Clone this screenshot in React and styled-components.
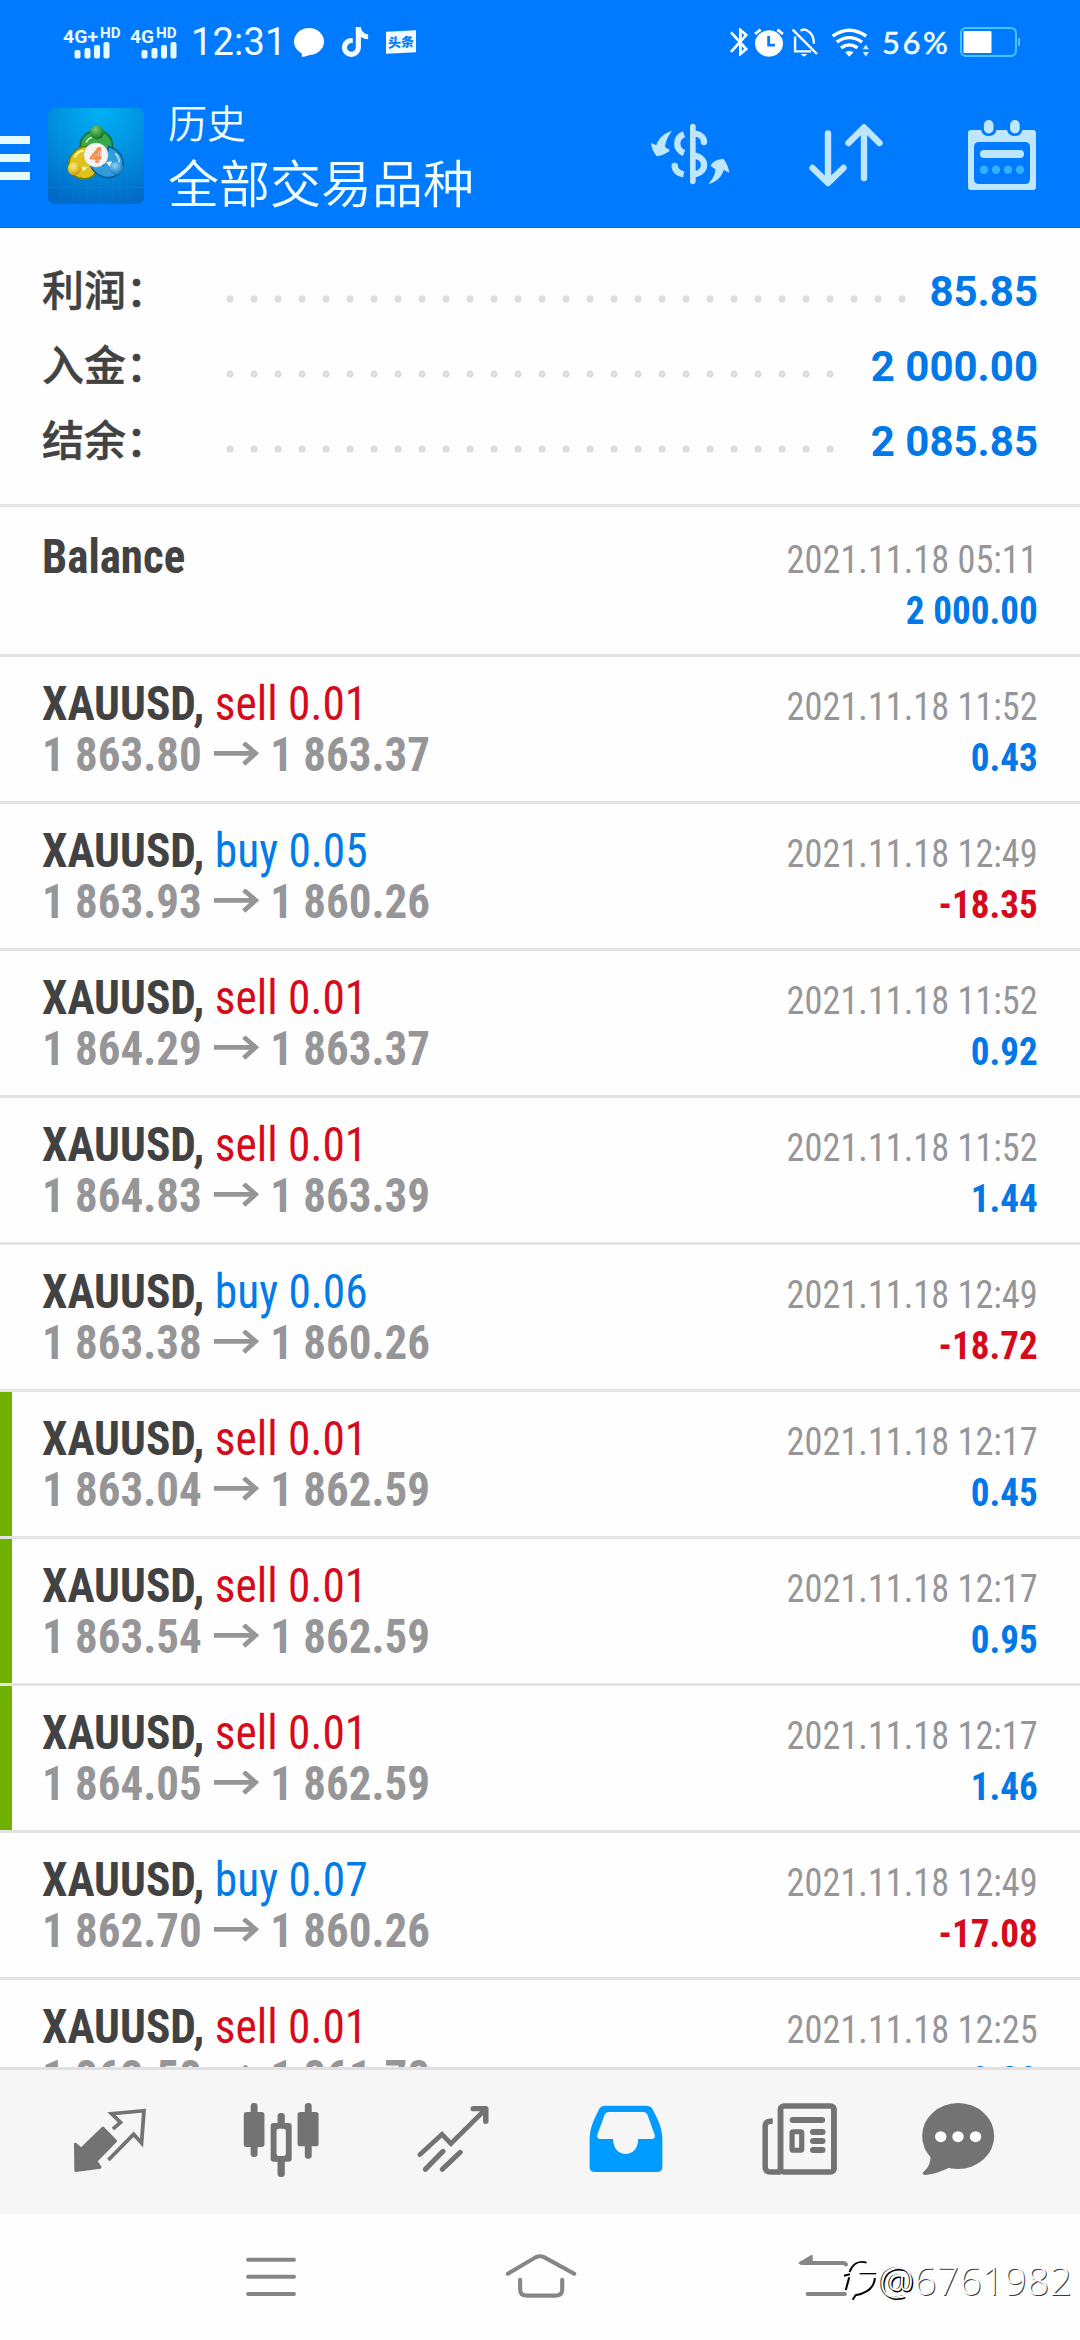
import React from 'react';
import styled, { createGlobalStyle } from 'styled-components';
import { FaTiktok } from 'react-icons/fa';

const GlobalStyle = createGlobalStyle`
  body {
    margin: 0;
    background-color: #fefefe;
  }

  svg {
    display: block;
    flex-shrink: 0;
  }
`;

const AppContainer = styled.div`
  display: flex;
  flex-direction: column;
  width: 1080px;
  height: 2340px;
  overflow: hidden;
  background-color: #fefefe;
  font-family: 'Roboto Condensed', Roboto, 'Noto Sans CJK SC', sans-serif;
`;

const Header = styled.header`
  height: 228px;
  box-sizing: border-box;
  border-bottom: 1px solid #0a67cc;
  background-color: #007bff;
  color: #f2fdff;
`;

const StatusBar = styled.div`
  display: flex;
  justify-content: space-between;
  height: 84px;
  padding: 0 60px 0 63px;
`;

const StatusGroup = styled.div`
  display: flex;
  align-items: center;
`;

const StatusItem = styled.div`
  margin-left: ${props => props.$gap || 0}px;
`;

const Clock = styled.div`
  width: 93px;
  margin-left: 14px;
  font-family: Roboto, sans-serif;
  font-size: 38px;
  line-height: 84px;
  letter-spacing: 0.2px;
`;

const BatteryLevel = styled.div`
  width: 70px;
  margin-left: 12px;
  font-family: Lato, sans-serif;
  font-size: 31px;
  line-height: 86px;
  letter-spacing: 2.5px;
  white-space: nowrap;
  -webkit-text-stroke: 0.5px #f2fdff;
`;

const NewsBadge = styled.div`
  width: 30px;
  margin-left: 16px;
  background-color: #f2fdff;
  color: #007bff;
  font-family: 'Noto Sans CJK SC', sans-serif;
  font-size: 13px;
  font-weight: 900;
  line-height: 22px;
  text-align: center;
  transform: skewY(-3deg);
`;

const Toolbar = styled.div`
  display: flex;
  align-items: center;
  height: 144px;
`;

const MenuButton = styled.div`
  display: flex;
  flex-direction: column;
  gap: 10px;
  width: 30px;
  margin: 4px 18px 0 0;
`;

const MenuBar = styled.span`
  height: 8px;
  background-color: #e6faff;
`;

const Titles = styled.div`
  flex: 1;
  align-self: flex-start;
  padding: 10px 0 0 24px;
  font-family: 'Noto Sans CJK SC', sans-serif;
  font-weight: 350;
`;

const Subtitle = styled.div`
  font-size: 39px;
  line-height: 54px;
`;

const Title = styled.div`
  font-size: 51px;
  line-height: 66px;
`;

const Action = styled.div`
  display: flex;
  justify-content: center;
  width: 156px;
`;

const Summary = styled.section`
  height: 250px;
  padding: 26px 42px 0;
  border-bottom: 3px solid #e3e3e3;
`;

const SummaryRow = styled.div`
  display: flex;
  height: 75px;
`;

const SummaryLabel = styled.div`
  width: 176px;
  color: #424242;
  font-family: 'Noto Sans CJK SC', sans-serif;
  font-size: 42px;
  font-weight: 500;
  line-height: 67px;
  -webkit-text-stroke: 0.5px #424242;
`;

const Leader = styled.div`
  flex: 1;
  margin-right: 22px;
  background: radial-gradient(circle at 12px 45px, #dedede 3.2px, transparent 4.2px) repeat-x;
  background-size: 24px 75px;
`;

const SummaryValue = styled.div`
  color: #0078e7;
  font-family: Roboto, sans-serif;
  font-size: 42px;
  font-weight: 700;
  line-height: 75px;
`;

const List = styled.main`
  height: 1560px;
  overflow: hidden;
`;

const Row = styled.div`
  display: flex;
  justify-content: space-between;
  height: ${props => (props.$tall ? 147 : 144)}px;
  box-sizing: border-box;
  padding: ${props => (props.$tall ? 24 : 21)}px 42px 0 ${props => (props.$marked ? 30 : 42)}px;
  border-left: ${props => (props.$marked ? '12px solid #6eb100' : 'none')};
`;

const Divider = styled.div`
  height: 3px;
  background-color: #e3e3e3;
`;

const Deal = styled.div`
  font-size: 48px;
  font-weight: 700;
  line-height: 51px;
  white-space: nowrap;
`;

const Symbol = styled.div`
  color: #424242;
  transform: scaleX(${props => props.$squeeze || 0.945});
  transform-origin: left;
`;

const Side = styled.span`
  color: ${props => (props.$side === 'buy' ? '#007be8' : '#d60a1a')};
  font-weight: 400;
`;

const Prices = styled.div`
  display: flex;
  align-items: center;
  gap: 12px;
  color: #969698;
  transform: scaleX(0.937);
  transform-origin: left;
`;

const Result = styled.div`
  padding-top: 4px;
  font-size: 39px;
  line-height: 51px;
  text-align: right;
  white-space: nowrap;
`;

const Time = styled.div`
  color: #969698;
  transform: scaleX(0.931);
  transform-origin: right;
`;

const Profit = styled.div`
  color: ${props => (props.$loss ? '#d60a1a' : '#0078e7')};
  font-weight: 700;
  transform: scaleX(0.951);
  transform-origin: right;
`;

const TabBar = styled.nav`
  display: grid;
  grid-template-columns: 171px 172px 173px 174px 158px 80px;
  align-items: center;
  height: 144px;
  padding-left: 70px;
  border-top: 3px solid #e0e0e0;
  background-color: #f6f6f6;
`;

const SystemNav = styled.div`
  position: relative;
  display: grid;
  grid-template-columns: 260px 292px 54px;
  height: 87px;
  padding: 39px 0 0 244px;
`;

const Watermark = styled.div`
  position: absolute;
  top: 43px;
  right: 8px;
  display: flex;
  align-items: center;
  color: #ffffff;
  font-family: 'Open Sans', sans-serif;
  font-size: 39px;
  font-weight: 300;
  line-height: 46px;
  letter-spacing: 0.3px;
  text-shadow: 1px 1px 0 #3a3a3a;
`;

const WatermarkAt = styled.span`
  text-shadow: 1.5px 1.5px 0 #000000, -1px 0 0 #222222;
`;

function Signal({ label, labelWidth, width }) {
  return (
    <svg width={width} height="36" viewBox={`0 0 ${width} 36`} fill="#e6faff" fontFamily="Roboto" fontWeight="700">
      <text x="0" y="18.5" fontSize="19" textLength={labelWidth} lengthAdjust="spacingAndGlyphs">{label}</text>
      <text x={width - 21} y="13.5" fontSize="14.5" textLength="20.5" lengthAdjust="spacingAndGlyphs">HD</text>
      <rect x="11.5" y="26" width="6" height="8.5" rx="2" />
      <rect x="21.5" y="24" width="6" height="10.5" rx="2" />
      <rect x="31" y="21" width="6" height="13.5" rx="2" />
      <rect x="40.5" y="18" width="6" height="16.5" rx="2" />
    </svg>
  );
}

const MessageIcon = () => (
  <svg width="30" height="29" viewBox="855 81 86 86" fill="#ffffff" preserveAspectRatio="none">
    <ellipse cx="898" cy="121" rx="43" ry="40" />
    <path d="M870 148 Q880 156 877 167 Q895 166 908 156Z" />
  </svg>
);

const BluetoothIcon = () => (
  <svg width="18" height="28" viewBox="552 84 52 84" fill="none" stroke="#ffffff" strokeWidth="8" preserveAspectRatio="none">
    <path d="M555 97 L599 147 L582 162 V90 L599 105 L555 156" />
  </svg>
);

const AlarmIcon = () => (
  <svg width="30" height="29" viewBox="622 84 86 88" fill="none" strokeWidth="8" preserveAspectRatio="none">
    <circle cx="665" cy="131" r="40" fill="#ffffff" />
    <path d="M664 108 V136 H682" stroke="#007bff" />
    <path d="M625 102 L641 89 M689 89 L705 102" stroke="#ffffff" />
  </svg>
);

const BellOffIcon = () => (
  <svg width="26" height="29" viewBox="732 84 76 88" fill="none" stroke="#f2fdff" strokeWidth="7" preserveAspectRatio="none">
    <path d="M734 89 L805 163" />
    <path d="M741 110 V155 H788" />
    <path d="M757 93 Q767 84 778 93 Q796 102 796 132" />
    <path d="M757 163 H777 L767 171Z" fill="#f2fdff" stroke="none" />
  </svg>
);

const WifiIcon = () => (
  <svg width="38" height="29" viewBox="847 84 110 86" fill="none" stroke="#ffffff" strokeWidth="10" preserveAspectRatio="none">
    <path d="M849 108 Q897 73 946 108 M861 126 Q897 99 934 126 M873 143 Q897 125 921 143" />
    <path d="M885 156 Q897 148 909 156 L897 169Z" fill="#ffffff" stroke="none" />
    <path d="M945 133 L954 147 H936Z M945 169 L954 155 H936Z" fill="#c4ecff" stroke="none" />
  </svg>
);

const BatteryIcon = () => (
  <svg width="60" height="30" viewBox="0 0 60 30">
    <rect x="1" y="1" width="55" height="28" rx="5" fill="none" stroke="#4fc3ff" strokeWidth="2" />
    <rect x="3.5" y="4" width="28" height="22" rx="1" fill="#ffffff" />
    <rect x="58" y="11" width="2" height="8" fill="#4fc3ff" />
  </svg>
);

// three linked figures around a "4" medallion
const Logo = () => (
  <svg width="96" height="96" viewBox="24 24 288 288">
    <defs>
      <radialGradient id="sky" cx="0.55" cy="0.05" r="1">
        <stop offset="0" stopColor="#00b0f4" />
        <stop offset="0.5" stopColor="#0090e0" />
        <stop offset="1" stopColor="#0068c6" />
      </radialGradient>
      <radialGradient id="green" cx="0.4" cy="0.3" r="0.7">
        <stop offset="0" stopColor="#7fcc6c" />
        <stop offset="1" stopColor="#0f7428" />
      </radialGradient>
      <radialGradient id="yellow" cx="0.4" cy="0.3" r="0.7">
        <stop offset="0" stopColor="#fff27a" />
        <stop offset="1" stopColor="#c89c08" />
      </radialGradient>
      <radialGradient id="blue" cx="0.4" cy="0.3" r="0.7">
        <stop offset="0" stopColor="#8ad2fb" />
        <stop offset="1" stopColor="#1478c0" />
      </radialGradient>
    </defs>
    <rect x="24" y="24" width="288" height="288" rx="20" fill="url(#sky)" />
    <path d="M60 24 V312 M100 24 V312 M140 24 V312 M180 24 V312 M220 24 V312 M260 24 V312 M24 262 H312" stroke="#2aa4ea" strokeOpacity="0.25" strokeWidth="2" />
    <g strokeWidth="5">
      <path d="M121 150 C116 115 140 92 170 92 C203 92 222 118 216 150 C212 172 200 184 184 190 L150 150Z" fill="#38a84c" stroke="#0d6b32" />
      <path d="M150 140 C118 135 88 160 86 192 C86 222 112 240 140 236 C158 232 168 222 172 205Z" fill="#e0c21c" stroke="#6d7c14" />
      <path d="M206 140 C236 148 254 172 248 202 C240 232 204 240 178 226 C164 218 158 210 152 198 L190 195Z" fill="#2f9cdc" stroke="#0a5c9e" />
    </g>
    <path d="M138 128 Q148 108 168 112" stroke="#c6efb4" strokeWidth="5" fill="none" />
    <path d="M104 172 Q112 154 130 152" stroke="#fff79a" strokeWidth="6" fill="none" />
    <path d="M226 160 Q242 178 236 194" stroke="#a6e2ff" strokeWidth="5" fill="none" />
    <path d="M125 202 L144 200 L130 214Z M198 186 L216 184 L210 202Z" fill="#e8f8e8" />
    <circle cx="171" cy="97" r="21" fill="url(#green)" />
    <circle cx="103" cy="206" r="20" fill="url(#yellow)" />
    <circle cx="229" cy="205" r="20" fill="url(#blue)" />
    <circle cx="168" cy="165" r="36" fill="#f6f4f2" stroke="#c8d6cc" strokeWidth="2" />
    <text x="168" y="187" fontSize="60" fontFamily="Roboto" fontStyle="italic" fontWeight="500" textAnchor="middle" fill="#fbdcc0" stroke="#f08a4a" strokeWidth="4">4</text>
  </svg>
);

const CurrencyIcon = () => (
  <svg width="96" height="96" viewBox="6 9 288 288" fill="none" stroke="#bfe6ff" strokeWidth="19">
    <path d="M158.5 65 V229" strokeWidth="17" strokeLinecap="round" />
    <path d="M132 88 C105 98 105 133 132 144" />
    <path d="M131 208 C116 205 105 196 104 183" />
    <circle cx="104" cy="183" r="9.5" fill="#bfe6ff" stroke="none" />
    <path d="M165 86 C182 88 192 98 192 111" />
    <circle cx="192" cy="111" r="9.5" fill="#bfe6ff" stroke="none" />
    <path d="M163 152 C202 158 202 202 163 208" />
    <path d="M96 78 C82 96 77 110 75 126 L90 136 Q78 150 50 154 Q36 138 33 114 L49 121 C56 100 70 85 96 78Z" fill="#bfe6ff" stroke="none" />
    <path d="M205 237 C219 222 225 210 226 193 L211 182 Q222 163 250 161 Q265 180 268 203 L251 195 C245 215 230 232 205 237Z" fill="#bfe6ff" stroke="none" />
  </svg>
);

const SortIcon = () => (
  <svg width="96" height="96" viewBox="798 108 96 96" fill="none" stroke="#bfe6ff" strokeWidth="6.4" strokeLinecap="round" strokeLinejoin="round">
    <path d="M828 133.5 V182 M812.5 168 L828 183 L843.5 168" />
    <path d="M864 178 V128 M848.5 143 L864 127.5 L879.5 143" />
  </svg>
);

const CalendarIcon = () => (
  <svg width="96" height="96" viewBox="954 108 96 96">
    <path
      fillRule="evenodd"
      fill="#bfe6ff"
      d="M971 130 H981 Q982.5 136 988.7 136 Q995 136 996.5 130 H1007 Q1008.5 136 1014.9 136 Q1021 136 1022.5 130 H1033 Q1036 130 1036 133 V187 Q1036 190 1033 190 H971 Q968 190 968 187 V133 Q968 130 971 130Z M979 142 Q974 142 974 147 V179 Q974 184 979 184 H1025 Q1030 184 1030 179 V147 Q1030 142 1025 142Z"
    />
    <g fill="#bfe6ff">
      <rect x="983.9" y="120" width="9.6" height="13.5" rx="4.8" />
      <rect x="1010.1" y="120" width="9.6" height="13.5" rx="4.8" />
      <rect x="980" y="150" width="44" height="8" rx="4" />
    </g>
    <g fill="#35afff">
      <circle cx="984" cy="169.7" r="4.2" />
      <circle cx="996" cy="169.7" r="4.2" />
      <circle cx="1008" cy="169.7" r="4.2" />
      <circle cx="1020" cy="169.7" r="4.2" />
    </g>
  </svg>
);

const ArrowIcon = () => (
  <svg width="49" height="26" viewBox="620 724 135 78" fill="none" stroke="#969698" strokeWidth="14" preserveAspectRatio="none">
    <path d="M621 758 H742 M709 727 L744 758 L709 790" />
  </svg>
);

const TabIcon = ({ left, children }) => (
  <svg width="80" height="80" viewBox={`${left} 426 232 240`} preserveAspectRatio="none" fill="none" stroke="#737373" strokeLinecap="round" strokeLinejoin="round">
    {children}
  </svg>
);

const QuotesIcon = () => (
  <TabIcon left={203.5}>
    <path d="M299 504 L336 543 L279 603 L291 622 L220 632 L219 552 L236 567Z" fill="#737373" strokeWidth="8" />
    <path d="M328 507 L350 487 L324 461 L418 452 L411 549 L388 523 L315 600" strokeWidth="11" strokeLinejoin="miter" strokeLinecap="butt" />
  </TabIcon>
);

const ChartIcon = () => (
  <TabIcon left={701}>
    <g fill="#737373" stroke="none">
      <rect x="709" y="456" width="60" height="105" rx="8" />
      <rect x="729" y="429" width="20" height="162" rx="9" />
      <rect x="807" y="459" width="21" height="192" rx="9" />
      <rect x="787" y="489" width="61" height="116" rx="9" />
      <rect x="804" y="506" width="27" height="82" rx="7" fill="#f6f6f6" />
      <rect x="865" y="456" width="61" height="103" rx="8" />
      <rect x="886" y="429" width="20" height="167" rx="9" />
    </g>
  </TabIcon>
);

const TradeIcon = () => (
  <TabIcon left={1201}>
    <path d="M1221 584 L1285 523 L1311 551 L1408 451" strokeWidth="14" strokeLinejoin="miter" />
    <path d="M1376 446 H1412 V484" strokeWidth="16" />
    <path d="M1288 574 L1237 628 M1338 577 L1286 628" strokeWidth="15" />
  </TabIcon>
);

const HistoryIcon = () => (
  <TabIcon left={135.5}>
    <path
      fillRule="evenodd"
      fill="#009bff"
      stroke="none"
      d="M190 437 H312 Q322 437 327 445 C345 480 357 505 357 540 V620 Q357 636 341 636 H162 Q146 636 146 620 V540 C146 505 158 480 175 445 Q180 437 190 437Z M203 456 H300 Q310 456 313 463 L335 525 Q337 537 325 537 H287 C287 597 214 597 214 537 H178 Q166 537 168 525 L190 463 Q193 456 203 456Z"
    />
  </TabIcon>
);

const NewsIcon = () => (
  <TabIcon left={640}>
    <rect x="699.5" y="438" width="155" height="198" rx="10" strokeWidth="17" />
    <path d="M677 483 Q655 483 655 497 V620 Q655 636 671 636 H700" strokeWidth="16" strokeLinecap="butt" />
    <path d="M735 480 H820 M794 516 H821 M794 543 H821 M794 570 H821" strokeWidth="18" />
    <rect x="733" y="515" width="28" height="56" rx="3" strokeWidth="15" />
  </TabIcon>
);

const ChatIcon = () => (
  <TabIcon left={1097}>
    <g fill="#737373" stroke="none">
      <ellipse cx="1213.5" cy="528" rx="104.5" ry="99" />
      <path d="M1132 580 Q1138 616 1112 637 Q1106 645 1120 645 Q1152 642 1190 622Z" />
      <g fill="#ffffff">
        <circle cx="1163" cy="530" r="16.5" />
        <circle cx="1213" cy="530" r="16.5" />
        <circle cx="1264" cy="530" r="16.5" />
      </g>
    </g>
  </TabIcon>
);

const NavIcon = ({ left, span, width, children }) => (
  <svg width={width} height="47" viewBox={`${left} 880 ${span} 140`} preserveAspectRatio="none" fill="none" stroke="#868686" strokeWidth="12" strokeLinecap="round" strokeLinejoin="round">
    {children}
  </svg>
);

const WatermarkLogo = () => (
  <svg width="36" height="44" viewBox="884 908 104 132" preserveAspectRatio="none" fill="none" stroke="#000000" strokeWidth="6">
    <path d="M896 948 L940 932 L974 950 L972 985 L925 1015 L898 1000Z" fill="#ffffff" stroke="none" />
    <path d="M903 950 C912 925 930 915 952 922" />
    <path d="M887 961 L904 957 M902 966 L892 1004" />
    <path d="M932 955 H980" strokeWidth="4" />
    <path d="M976 968 C974 1000 950 1014 920 1020 L912 1033" />
  </svg>
);

const totals = [
  ['利润：', '85.85'],
  ['入金：', '2 000.00'],
  ['结余：', '2 085.85'],
];

const deals = [
  { side: 'sell', lots: '0.01', open: '1 863.80', close: '1 863.37', time: '11:52', profit: '0.43' },
  { side: 'buy', lots: '0.05', open: '1 863.93', close: '1 860.26', time: '12:49', profit: '-18.35' },
  { side: 'sell', lots: '0.01', open: '1 864.29', close: '1 863.37', time: '11:52', profit: '0.92' },
  { side: 'sell', lots: '0.01', open: '1 864.83', close: '1 863.39', time: '11:52', profit: '1.44' },
  { side: 'buy', lots: '0.06', open: '1 863.38', close: '1 860.26', time: '12:49', profit: '-18.72' },
  { side: 'sell', lots: '0.01', open: '1 863.04', close: '1 862.59', time: '12:17', profit: '0.45', marked: true },
  { side: 'sell', lots: '0.01', open: '1 863.54', close: '1 862.59', time: '12:17', profit: '0.95', marked: true },
  { side: 'sell', lots: '0.01', open: '1 864.05', close: '1 862.59', time: '12:17', profit: '1.46', marked: true },
  { side: 'buy', lots: '0.07', open: '1 862.70', close: '1 860.26', time: '12:49', profit: '-17.08' },
  { side: 'sell', lots: '0.01', open: '1 862.58', close: '1 861.78', time: '12:25', profit: '0.80' },
];

function App() {
  return (
    <>
      <GlobalStyle />
      <AppContainer>
        <Header>
          <StatusBar>
            <StatusGroup>
              <Signal label="4G+" labelWidth={35} width={58} />
              <StatusItem $gap={9}><Signal label="4G" labelWidth={24} width={47} /></StatusItem>
              <Clock>12:31</Clock>
              <StatusItem $gap={10}><MessageIcon /></StatusItem>
              <StatusItem $gap={16}><FaTiktok size={30} /></StatusItem>
              <NewsBadge>头条</NewsBadge>
            </StatusGroup>
            <StatusGroup>
              <BluetoothIcon />
              <StatusItem $gap={6}><AlarmIcon /></StatusItem>
              <StatusItem $gap={8}><BellOffIcon /></StatusItem>
              <StatusItem $gap={14}><WifiIcon /></StatusItem>
              <BatteryLevel>56%</BatteryLevel>
              <StatusItem $gap={8}><BatteryIcon /></StatusItem>
            </StatusGroup>
          </StatusBar>
          <Toolbar>
            <MenuButton>
              <MenuBar />
              <MenuBar />
              <MenuBar />
            </MenuButton>
            <Logo />
            <Titles>
              <Subtitle>历史</Subtitle>
              <Title>全部交易品种</Title>
            </Titles>
            <Action><CurrencyIcon /></Action>
            <Action><SortIcon /></Action>
            <Action><CalendarIcon /></Action>
          </Toolbar>
        </Header>

        <Summary>
          {totals.map(([label, value]) => (
            <SummaryRow key={label}>
              <SummaryLabel>{label}</SummaryLabel>
              <Leader />
              <SummaryValue>{value}</SummaryValue>
            </SummaryRow>
          ))}
        </Summary>

        <List>
          <Row $tall>
            <Deal>
              <Symbol $squeeze={0.936}>Balance</Symbol>
            </Deal>
            <Result>
              <Time>2021.11.18 05:11</Time>
              <Profit>2 000.00</Profit>
            </Result>
          </Row>
          {deals.map((deal, i) => (
            <React.Fragment key={i}>
              <Divider />
              <Row $marked={deal.marked}>
                <Deal>
                  <Symbol>
                    XAUUSD, <Side $side={deal.side}>{deal.side} {deal.lots}</Side>
                  </Symbol>
                  <Prices>
                    {deal.open}
                    <ArrowIcon />
                    {deal.close}
                  </Prices>
                </Deal>
                <Result>
                  <Time>2021.11.18 {deal.time}</Time>
                  <Profit $loss={deal.profit.startsWith('-')}>{deal.profit}</Profit>
                </Result>
              </Row>
            </React.Fragment>
          ))}
        </List>

        <TabBar>
          <QuotesIcon />
          <ChartIcon />
          <TradeIcon />
          <HistoryIcon />
          <NewsIcon />
          <ChatIcon />
        </TabBar>

        <SystemNav>
          <NavIcon left={708} span={157} width={54}>
            <path d="M720 900 H853 M720 951 H853 M720 1002 H853" />
          </NavIcon>
          <NavIcon left={1463} span={216} width={74}>
            <path d="M1474 942 L1555 893 Q1568 886 1581 893 L1668 942" />
            <path d="M1510 960 V988 Q1510 1007 1529 1007 H1614 Q1633 1007 1633 988 V960" />
          </NavIcon>
          <NavIcon left={744} span={157} width={54}>
            <path d="M760 910 H880 Q887 910 889 914 M778 1002 H886" />
            <path d="M754 910 L790 888 V908Z" fill="#868686" strokeWidth="5" />
          </NavIcon>
          <Watermark>
            <WatermarkLogo />
            <WatermarkAt>@</WatermarkAt>6761982
          </Watermark>
        </SystemNav>
      </AppContainer>
    </>
  );
}

export default App;
